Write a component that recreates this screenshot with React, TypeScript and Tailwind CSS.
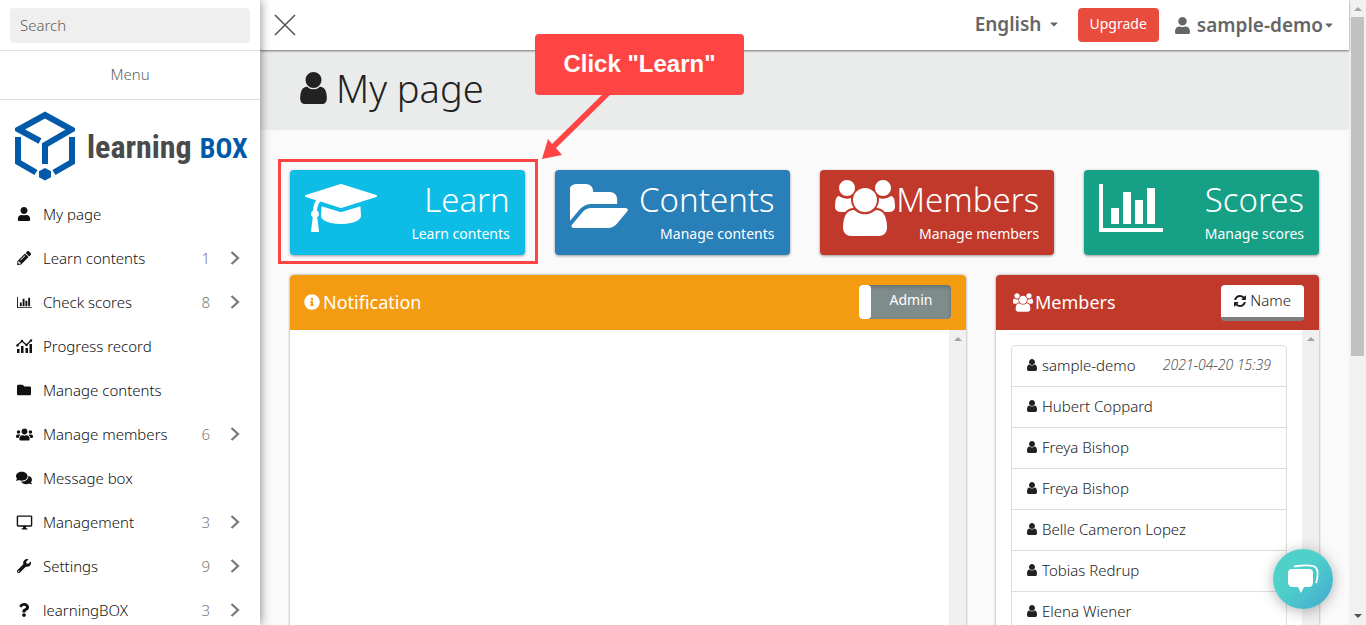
import type { ReactNode } from "react";
import {
  FaUser,
  FaPencilAlt,
  FaFolder,
  FaUsers,
  FaComments,
  FaWrench,
  FaQuestion,
  FaInfoCircle,
  FaCaretDown,
} from "react-icons/fa";
import { MdOutlineDesktopWindows } from "react-icons/md";

const paths = {
  user: "M1536 1399q0 109-62.5 187t-150.5 78h-854q-88 0-150.5-78t-62.5-187q0-85 8.5-160.5t31.5-152 58.5-131 94-89 134.5-34.5q131 128 313 128t313-128q76 0 134.5 34.5t94 89 58.5 131 31.5 152 8.5 160.5zm-256-887q0 159-112.5 271.5t-271.5 112.5-271.5-112.5-112.5-271.5 112.5-271.5 271.5-112.5 271.5 112.5 112.5 271.5z",
  cap: "M1774 836l18 316q4 69-82 128t-235 93.5-323 34.5-323-34.5-235-93.5-82-128l18-316 574 181q22 7 48 7t48-7zm530-324q0 23-22 31l-1120 352q-4 1-10 1t-10-1l-652-206q-43 34-71 111.5t-34 178.5q63 36 63 109 0 69-58 107l58 433q2 14-8 25-9 11-24 11h-192q-15 0-24-11-10-11-8-25l58-433q-58-38-58-107 0-73 65-111 11-207 98-330l-333-104q-22-8-22-31t22-31l1120-352q4-1 10-1t10 1l1120 352q22 8 22 31z",
  folder:
    "M1943 952q0 31-31 66l-336 396q-43 51-120.5 86.5t-143.5 35.5h-1088q-34 0-60.5-13t-26.5-43q0-31 31-66l336-396q43-51 120.5-86.5t143.5-35.5h1088q34 0 60.5 13t26.5 43zm-343-344v160h-832q-94 0-197 47.5t-164 119.5l-337 396-5 6q0-4-.5-12.5t-.5-12.5v-960q0-92 66-158t158-66h320q92 0 158 66t66 158v32h544q92 0 158 66t66 158z",
  users:
    "M657 896q-162 5-265 128h-134q-82 0-138-40.5t-56-118.5q0-353 124-353 6 0 43.5 21t97.5 42.5 119 21.5q67 0 133-23-5 37-5 66 0 139 81 256zm1071 637q0 120-73 189.5t-194 69.5h-874q-121 0-194-69.5t-73-189.5q0-53 3.5-103.5t14-109 26.5-108.5 43-97.5 62-81 85.5-53.5 111.5-20q10 0 43 21.5t73 48 107 48 135 21.5 135-21.5 107-48 73-48 43-21.5q61 0 111.5 20t85.5 53.5 62 81 43 97.5 26.5 108.5 14 109 3.5 103.5zm-1024-1277q0 106-75 181t-181 75-181-75-75-181 75-181 181-75 181 75 75 181zm704 384q0 159-112.5 271.5t-271.5 112.5-271.5-112.5-112.5-271.5 112.5-271.5 271.5-112.5 271.5 112.5 112.5 271.5zm576 225q0 78-56 118.5t-138 40.5h-134q-103-123-265-128 81-117 81-256 0-29-5-66 66 23 133 23 59 0 119-21.5t97.5-42.5 43.5-21q124 0 124 353zm-128-609q0 106-75 181t-181 75-181-75-75-181 75-181 181-75 181 75 75 181z",
  chart:
    "M640 896v512h-256v-512h256zm384-512v1024h-256v-1024h256zm1024 1152v128h-2048v-1536h128v1408h1920zm-640-896v768h-256v-768h256zm384-384v1152h-256v-1152h256z",
  refresh:
    "M1639 1056q0 5-1 7-64 268-268 434.5t-478 166.5q-146 0-282.5-55t-243.5-157l-129 129q-19 19-45 19t-45-19-19-45v-448q0-26 19-45t45-19h448q26 0 45 19t19 45-19 45l-137 137q71 66 161 102t187 36q134 0 250-65t186-179q11-17 53-117 8-23 30-23h192q13 0 22.5 9.5t9.5 22.5zm25-800v448q0 26-19 45t-45 19h-448q-26 0-45-19t-19-45 19-45l138-138q-148-137-349-137-134 0-250 65t-186 179q-11 17-53 117-8 23-30 23h-199q-13 0-22.5-9.5t-9.5-22.5v-7q65-268 270-434.5t480-166.5q146 0 284 55.5t245 156.5l130-129q19-19 45-19t45 19 19 45z",
};

function Glyph({ d, box, className }: { d: string; box: string; className: string }) {
  return (
    <svg viewBox={box} className={`${className} shrink-0`} fill="currentColor" aria-hidden="true">
      <path d={d} />
    </svg>
  );
}

function ProgressIcon() {
  return (
    <svg viewBox="0 0 17 15" className="w-[17px] h-[15px]" fill="currentColor" aria-hidden="true">
      <path d="M1 10h2.500v4H1zM5 7h2.500v7H5zM9.500 9H12v5H9.500zM13.500 5H16v9h-2.500z" />
      <path d="M1 6.500 6 2l4.500 4L15 1.500" fill="none" stroke="currentColor" strokeWidth="1.300" />
      <circle cx="1.500" cy="6.500" r="1.200" />
      <circle cx="6" cy="2" r="1.200" />
      <circle cx="10.500" cy="6" r="1.200" />
      <circle cx="15" cy="1.500" r="1.200" />
    </svg>
  );
}

const menu: { label: string; icon: ReactNode; count?: number }[] = [
  { label: "My page", icon: <FaUser size={14} /> },
  { label: "Learn contents", icon: <FaPencilAlt size={14} />, count: 1 },
  { label: "Check scores", icon: <Glyph d={paths.chart} box="0 0 2048 1792" className="w-[15px] h-[13px]" />, count: 8 },
  { label: "Progress record", icon: <ProgressIcon /> },
  { label: "Manage contents", icon: <FaFolder size={14} /> },
  { label: "Manage members", icon: <FaUsers size={17} />, count: 6 },
  { label: "Message box", icon: <FaComments size={16} /> },
  { label: "Management", icon: <MdOutlineDesktopWindows size={17} />, count: 3 },
  { label: "Settings", icon: <FaWrench size={14} />, count: 9 },
  { label: "learningBOX", icon: <FaQuestion size={14} />, count: 3 },
];

const cards = [
  { title: "Learn", sub: "Learn contents", color: "bg-[#0dbde5]", d: paths.cap, box: "0 0 2304 1792", size: "w-[72px] h-14" },
  { title: "Contents", sub: "Manage contents", color: "bg-[#2980b9]", d: paths.folder, box: "96 0 1943 1792", size: "w-[61px] h-14" },
  { title: "Members", sub: "Manage members", color: "bg-[#c0392b]", d: paths.users, box: "64 0 1920 1792", size: "w-[60px] h-14" },
  { title: "Scores", sub: "Manage scores", color: "bg-[#16a085]", d: paths.chart, box: "0 0 2048 1792", size: "w-16 h-14" },
];

const members = [
  { name: "sample-demo", date: "2021-04-20 15:39" },
  { name: "Hubert Coppard" },
  { name: "Freya Bishop" },
  { name: "Freya Bishop" },
  { name: "Belle Cameron Lopez" },
  { name: "Tobias Redrup" },
  { name: "Elena Wiener" },
];

function Logo() {
  return (
    <a href="#" className="flex items-center gap-3 h-[92px] px-[15px]">
      <svg viewBox="0 0 60 70" className="w-[60px] h-[70px] shrink-0" aria-hidden="true">
        <g fill="none" stroke="#0059a9" strokeWidth="6">
          <path d="M25 30 3.500 18.500 30 4l26.500 14.500L30 34v19" />
          <path d="M3 26v25l18 10.500M57 26v25L39 61.500" />
        </g>
        <path fill="#0059a9" d="M30 57l6 3.300v6L30 69.500l-6-3.200v-6z" />
      </svg>
      <span className="flex items-baseline gap-2 pt-1 font-['Roboto_Condensed','Liberation_Sans_Narrow','DejaVu_Sans_Condensed',sans-serif] text-[32px] leading-9 font-bold text-[#4a4a4a]">
        learning<span className="text-[28px] text-[#0059a9]">BOX</span>
      </span>
    </a>
  );
}

function Sidebar() {
  return (
    <aside className="relative z-20 w-[260px] shrink-0 bg-white overflow-hidden shadow-[0_0_10px_rgba(0,0,0,0.5)]">
      <div className="h-[51px] px-[10px] pt-2 border-b border-[#e0e0e0]">
        <input
          type="text"
          aria-label="Search"
          placeholder="Search"
          className="w-full h-[35px] px-[10px] pb-[2px] rounded bg-[#efefef] text-[15px] font-light placeholder:text-[#606060]"
        />
      </div>
      <div className="h-[49px] flex items-center justify-center pb-[2px] border-b border-[#e0e0e0] font-light text-[#606060]">
        Menu
      </div>
      <Logo />
      <nav className="font-light">
        {menu.map((m) => (
          <a key={m.label} href="#" className="flex items-center h-11 pl-[15px] pr-5 text-[#111]">
            <span className="w-[18px] mr-[10px] flex justify-center">{m.icon}</span>
            <span className="flex-1">{m.label}</span>
            {m.count && (
              <>
                <span className="text-[#777]">{m.count}</span>
                <svg viewBox="0 0 10 16" className="w-[10px] h-4 ml-5" fill="none" stroke="#777" strokeWidth="2.200" aria-hidden="true">
                  <path d="M1.500 2 8 8l-6.500 6" />
                </svg>
              </>
            )}
          </a>
        ))}
      </nav>
    </aside>
  );
}

function Header() {
  return (
    <header className="relative z-10 flex items-center h-[50px] pl-[14px] pr-[14px] bg-white text-[#666] shadow-[0_1px_2px_rgba(0,0,0,0.5)]">
      <button type="button" aria-label="Close menu">
        <svg viewBox="0 0 22 22" className="w-[22px] h-[22px]" stroke="#555" strokeWidth="1.600" aria-hidden="true">
          <path d="M1 1l20 20M21 1 1 21" />
        </svg>
      </button>
      <button type="button" className="ml-auto pb-[2px] flex items-center gap-[6px] text-[19px] font-semibold">
        English <FaCaretDown size={12} />
      </button>
      <button type="button" className="ml-[18px] h-[34px] px-3 pb-[2px] rounded bg-[#e74c3c] text-sm text-white">
        Upgrade
      </button>
      <button type="button" className="ml-[15px] flex items-center text-[19px] font-semibold">
        <FaUser size={17} className="mr-[6px]" />
        sample-demo
        <FaCaretDown size={12} />
      </button>
    </header>
  );
}

function ScrollRail() {
  return (
    <div className="w-[17px] shrink-0 bg-[#f0f0f0] flex flex-col items-center pt-[7px]" aria-hidden="true">
      <div className="border-x-4 border-b-4 border-x-transparent border-b-[#a3a3a3]" />
    </div>
  );
}

function Callout() {
  return (
    <div className="absolute z-30 left-[275px] top-[34px]">
      <div className="w-[209px] h-[61px] rounded bg-[#ff4444] flex items-center justify-center pb-[2px] font-['Liberation_Sans',Arial,sans-serif] text-2xl font-bold text-white">
        Click "Learn"
      </div>
      <svg viewBox="0 0 80 66" className="absolute left-0 top-[60px] w-20 h-[66px]" aria-hidden="true">
        <path d="M68 0h8L21 54l6 7-20 4 6-20 4 5z" fill="#ff4444" />
      </svg>
    </div>
  );
}

export default function App() {
  return (
    <div className="flex h-screen overflow-hidden bg-[#fafafa] font-['Noto_Sans',sans-serif] text-[15px] text-[#222]">
      <Sidebar />
      <div className="relative flex-1 min-w-0">
        <Header />
        <Callout />
        <h1 className="flex items-center gap-[9px] h-20 pl-10 bg-[#eaeceb] text-[38px] font-light pb-1">
          <Glyph d={paths.user} box="256 128 1280 1536" className="w-[27px] h-8" />
          My page
        </h1>
        <main className="px-[30px] pt-10">
          <div className="grid grid-cols-4 gap-[30px]">
            {cards.map((c, i) => (
              <a
                key={c.title}
                href="#"
                className={`relative flex h-[85px] px-[15px] pt-[10px] rounded text-white shadow-[0_1px_3px_rgba(0,0,0,0.4)] ${c.color}`}
              >
                <Glyph d={c.d} box={c.box} className={c.size} />
                <div className="flex-1 min-w-0 flex flex-col items-end whitespace-nowrap">
                  <div className="text-[33px] leading-10 font-light">{c.title}</div>
                  <div className="text-sm leading-7">{c.sub}</div>
                </div>
                {i === 0 && <span className="absolute -left-3 -right-[13px] -top-[11px] -bottom-[9px] border-3 border-[#ff4444]" />}
              </a>
            ))}
          </div>

          <div className="grid grid-cols-3 gap-[30px] mt-5">
            <section className="col-span-2 h-[400px] flex flex-col rounded bg-white overflow-hidden shadow-[0_0_3px_rgba(0,0,0,0.4)]">
              <div className="h-[55px] flex items-center pl-[14px] pr-[15px] pb-[2px] bg-[#f39c12] text-white">
                <FaInfoCircle size={16} className="mr-[3px]" />
                <h2 className="text-lg">Notification</h2>
                <button
                  type="button"
                  role="switch"
                  aria-checked="false"
                  className="ml-auto flex h-[34px] w-[92px] rounded bg-[#7f8c8c] text-sm shadow-[inset_0_2px_4px_rgba(0,0,0,0.2)]"
                >
                  <span className="w-3 h-full rounded bg-white" />
                  <span className="flex-1 leading-[30px]">Admin</span>
                </button>
              </div>
              <div className="flex-1 flex justify-end">
                <ScrollRail />
              </div>
            </section>

            <section className="h-[400px] flex flex-col rounded bg-white overflow-hidden shadow-[0_0_3px_rgba(0,0,0,0.4)]">
              <div className="h-[55px] shrink-0 flex items-center pl-[17px] pr-[15px] bg-[#c0392b] text-white">
                <Glyph d={paths.users} box="64 0 1920 1792" className="w-5 h-[19px] mr-[2px]" />
                <h2 className="pb-[2px] text-lg">Members</h2>
                <button
                  type="button"
                  className="ml-auto flex items-center gap-1 h-9 px-[13px] rounded bg-white border-b-4 border-[#808080] text-[15px] font-light text-[#222]"
                >
                  <Glyph d={paths.refresh} box="128 128 1536 1536" className="w-3 h-3" />
                  Name
                </button>
              </div>
              <div className="flex-1 flex min-h-0">
                <ul className="flex-1 mx-[15px] mt-[15px] border border-[#ddd] rounded font-light">
                  {members.map((m, i) => (
                    <li key={i} className="flex items-center h-[41px] px-[15px] pb-[2px] border-b border-[#ddd]">
                      <Glyph d={paths.user} box="256 128 1280 1536" className="w-[10px] h-3 mr-[5px]" />
                      {m.name}
                      {m.date && <em className="ml-auto text-sm text-[#555]">{m.date}</em>}
                    </li>
                  ))}
                </ul>
                <ScrollRail />
              </div>
            </section>
          </div>
        </main>
      </div>

      <div className="w-[17px] shrink-0 bg-[#f1f1f1] flex flex-col items-center py-[7px]" aria-hidden="true">
        <div className="border-x-4 border-b-4 border-x-transparent border-b-[#a3a3a3]" />
        <div className="w-[13px] h-[339px] mt-[6px] bg-[#c1c1c1]" />
        <div className="mt-auto border-x-4 border-t-4 border-x-transparent border-t-[#505050]" />
      </div>

      <button
        type="button"
        aria-label="Chat"
        className="fixed z-30 right-[33px] bottom-4 w-[60px] h-[60px] rounded-full bg-linear-to-br from-[#4fd1c9] from-40% to-[#45a9cf] flex items-center justify-center shadow-[0_2px_14px_rgba(0,0,0,0.3)]"
      >
        <svg viewBox="0 0 32 30" className="w-8 h-[30px]" aria-hidden="true">
          <path d="M5 5h17q4 0 4 4v9q0 5-4 5h-5l-3 6-3-6H6q-5 0-5-5V9q0-4 4-4z" fill="#fff" />
          <path d="M7 2.500Q20 .5 26 2q4 1 4.500 6 .5 6-1.500 11" fill="none" stroke="#fff" strokeWidth="1.800" />
        </svg>
      </button>
    </div>
  );
}
